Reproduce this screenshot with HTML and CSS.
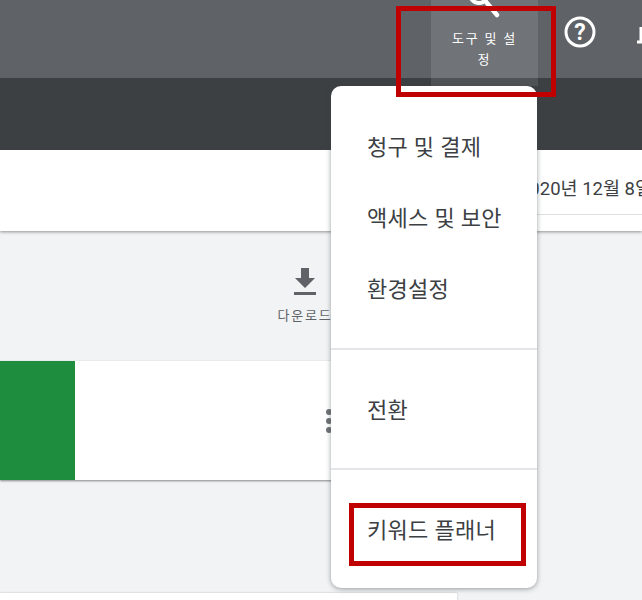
FILE: index.html
```html
<!DOCTYPE html>
<html lang="ko">
<head>
<meta charset="utf-8">
<title>도구 및 설정</title>
<link rel="stylesheet" href="styles.css">
</head>
<body>
<div class="page">
  <header class="topbar">
    <div class="tools">
      <svg class="tools-icon" width="107" height="24" viewBox="0 0 107 24"><circle cx="48" cy="-6" r="9" fill="none" stroke="#fff" stroke-width="4"/><path d="M56 3 L66 15" stroke="#fff" stroke-width="4.5" stroke-linecap="round"/></svg>
      <span class="tools-label">도구 및 설<br>정</span>
    </div>
    <svg class="help" width="38" height="38" viewBox="0 0 38 38"><circle cx="19" cy="19" r="14" fill="none" stroke="#fff" stroke-width="3"/><text x="19" y="27" text-anchor="middle" class="help-q">?</text></svg>
    <svg class="person" width="6" height="20" viewBox="0 0 6 20"><path d="M4 0v14M0 15h6" stroke="#fff" stroke-width="3"/></svg>
  </header>
  <div class="band"><div class="band-tab"></div></div>
  <div class="datebar">
    <span class="date">2020년 12월 8일</span>
    <div class="date-rule"></div>
  </div>
  <main class="content">
    <div class="download">
      <svg width="24" height="28" viewBox="0 0 24 28"><path d="M8 0h8v10h6L12 20 2 10h6z" fill="#5f6368"/><rect x="1" y="24" width="22" height="3" fill="#5f6368"/></svg>
      <span class="download-label">다운로드</span>
    </div>
    <section class="card">
      <div class="green"></div>
      <div class="dots"><i></i><i></i><i></i></div>
    </section>
    <div class="card-low"></div>
  </main>
  <nav class="menu">
    <div class="group">
      <a class="item">청구 및 결제</a>
      <a class="item">액세스 및 보안</a>
      <a class="item">환경설정</a>
    </div>
    <div class="group">
      <a class="item">전환</a>
    </div>
    <div class="group">
      <a class="item">키워드 플래너</a>
    </div>
  </nav>
  <div class="mark mark-tools"></div>
  <div class="mark mark-planner"></div>
</div>
</body>
</html>
```
FILE: styles.css
```css
* { box-sizing: border-box; }
html, body { margin: 0; padding: 0; }
body { font-family: Roboto, "Noto Sans CJK KR", sans-serif; background: #f1f3f4; }
.page { position: relative; width: 642px; height: 600px; overflow: hidden; background: #f1f3f4; }
.topbar { height: 78px; background: #5f6368; display: flex; align-items: flex-start; padding-left: 431px; overflow: hidden; }
.tools { width: 107px; height: 78px; background: #707377; display: flex; flex-direction: column; align-items: center; flex: none; }
.tools-icon { display: block; flex: none; margin-bottom: 3px; }
.tools-label { color: #fff; font-size: 13px; line-height: 21px; text-align: center; letter-spacing: 1.8px; padding-top: 1px; }
.help { flex: none; margin: 13px 0 0 23px; }
.help-q { fill: #fff; font-size: 23px; font-weight: 700; font-family: Roboto, sans-serif; }
.person { flex: none; margin: 27px 0 0 38px; }
.band { height: 72px; background: #3c4043; padding-left: 431px; }
.band-tab { width: 107px; height: 8px; background: #505356; }
.datebar { height: 81px; background: #fff; box-shadow: 0 1px 3px rgba(60,64,67,.55); display: flex; flex-direction: column; align-items: flex-end; padding-top: 26px; position: relative; }
.date { font-size: 18.5px; line-height: 26px; color: #3c4043; white-space: nowrap; margin-right: -10px; }
.date-rule { width: 105px; height: 1px; margin-top: 12px; background: #e0e0e0; }
.content { padding-top: 37px; }
.download { width: 60px; margin-left: 275px; display: flex; flex-direction: column; align-items: center; }
.download-label { font-size: 13px; line-height: 18px; color: #5f6368; white-space: nowrap; letter-spacing: 1.8px; margin-top: 11px; }
.card { width: 400px; height: 119px; margin-top: 36px; background: #fff; box-shadow: 0 1px 2px rgba(60,64,67,.6); display: flex; justify-content: space-between; align-items: center; }
.green { width: 75px; height: 100%; background: #1e8e3e; }
.dots { display: flex; flex-direction: column; gap: 3px; margin-right: 68px; }
.dots i { display: block; width: 6px; height: 6px; border-radius: 50%; background: #6f7377; }
.card-low { width: 457px; height: 20px; margin-top: 113px; background: #fff; box-shadow: 0 0 2px rgba(60,64,67,.3); }
.menu { position: absolute; left: 331px; top: 86px; width: 206px; height: 502px; background: #fff; border-radius: 10px; box-shadow: 0 1px 5px rgba(60,64,67,.5); display: flex; flex-direction: column; }
.group { padding: 25px 0 22px; border-bottom: 2px solid #e4e5e8; display: flex; flex-direction: column; }
.group:first-child { padding: 26px 0 23px; }
.group:last-child { border-bottom: 0; }
.item { display: block; height: 71px; padding-left: 36px; font-size: 22px; line-height: 71px; letter-spacing: .3px; color: #3c4043; white-space: nowrap; }
.mark { position: absolute; border: 5px solid #c00000; }
.mark-tools { left: 396px; top: 6px; width: 160px; height: 91px; }
.mark-planner { left: 349px; top: 503px; width: 177px; height: 63px; }
```
